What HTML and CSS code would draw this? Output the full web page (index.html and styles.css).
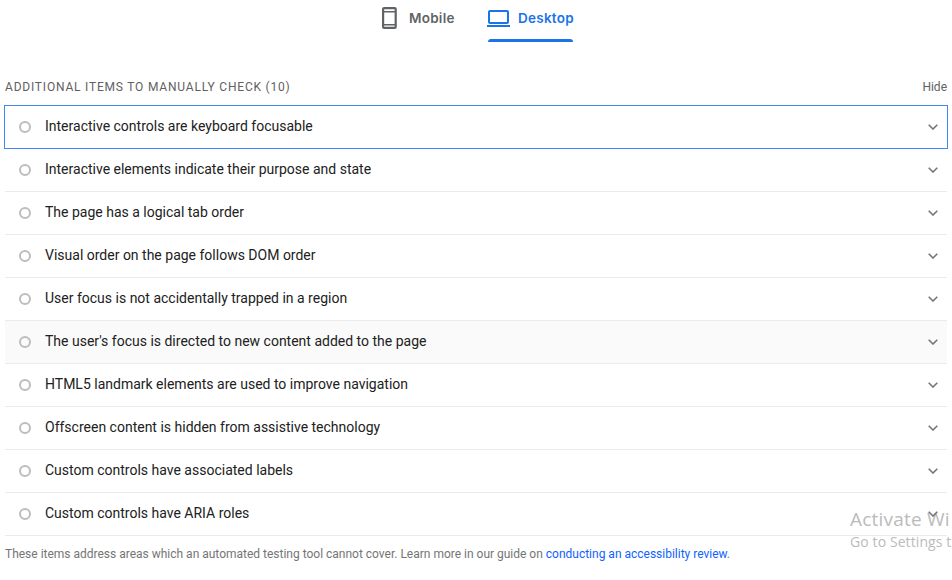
FILE: index.html
```
<!DOCTYPE html>
<html lang="en">
<head>
<meta charset="utf-8">
<title>Accessibility report</title>
<link rel="stylesheet" href="styles.css">
</head>
<body>
<svg class="defs" width="0" height="0">
  <symbol id="chevron" viewBox="0 0 10 6"><path d="M.7.8 5 5 9.3.8" fill="none" stroke="#757575" stroke-width="1.6"/></symbol>
</svg>
<nav class="tabs">
  <a class="tab mobile">
    <svg width="15" height="22" viewBox="0 0 15 22"><rect x="1.1" y="1.1" width="12.6" height="19.8" rx="1" fill="none" stroke="currentColor" stroke-width="2.2"/><path d="M2 4.75h11M2 17.75h11" stroke="currentColor" stroke-width="1.7"/></svg>
    <span>Mobile</span>
  </a>
  <a class="tab desktop">
    <svg width="23" height="17" viewBox="0 0 23 17"><rect x="2" y="1" width="19" height="12" rx="1" fill="none" stroke="currentColor" stroke-width="2"/><path d="M0 16h23" stroke="currentColor" stroke-width="2"/></svg>
    <span>Desktop</span>
  </a>
</nav>
<main class="group">
  <header class="group-header"><span class="group-title">ADDITIONAL ITEMS TO MANUALLY CHECK (10)</span><span>Hide</span></header>
  <ul class="audits">
    <li class="audit focused"><i class="dot"></i><span class="title">Interactive controls are keyboard focusable</span><svg class="chevron"><use href="#chevron"/></svg></li>
    <li class="audit"><i class="dot"></i><span class="title">Interactive elements indicate their purpose and state</span><svg class="chevron"><use href="#chevron"/></svg></li>
    <li class="audit"><i class="dot"></i><span class="title">The page has a logical tab order</span><svg class="chevron"><use href="#chevron"/></svg></li>
    <li class="audit"><i class="dot"></i><span class="title">Visual order on the page follows DOM order</span><svg class="chevron"><use href="#chevron"/></svg></li>
    <li class="audit"><i class="dot"></i><span class="title">User focus is not accidentally trapped in a region</span><svg class="chevron"><use href="#chevron"/></svg></li>
    <li class="audit hovered"><i class="dot"></i><span class="title">The user's focus is directed to new content added to the page</span><svg class="chevron"><use href="#chevron"/></svg></li>
    <li class="audit"><i class="dot"></i><span class="title">HTML5 landmark elements are used to improve navigation</span><svg class="chevron"><use href="#chevron"/></svg></li>
    <li class="audit"><i class="dot"></i><span class="title">Offscreen content is hidden from assistive technology</span><svg class="chevron"><use href="#chevron"/></svg></li>
    <li class="audit"><i class="dot"></i><span class="title">Custom controls have associated labels</span><svg class="chevron"><use href="#chevron"/></svg></li>
    <li class="audit"><i class="dot"></i><span class="title">Custom controls have ARIA roles</span><svg class="chevron"><use href="#chevron"/></svg></li>
  </ul>
  <p class="note">These items address areas which an automated testing tool cannot cover. Learn more in our guide on <a>conducting an accessibility review</a>.</p>
</main>
<aside class="watermark"><div class="wm-title">Activate Wi</div><div class="wm-text">Go to Settings t</div></aside>
</body>
</html>
```
FILE: styles.css
```
* { box-sizing: border-box; }
body { margin: 0; height: 580px; overflow: hidden; position: relative; background: #fff; font-family: Roboto, sans-serif; }
.defs { display: block; }
.tabs { display: flex; height: 42px; padding-left: 382px; color: #5f6368; font: 600 13.5px/36px Inter, sans-serif; letter-spacing: .25px; }
.tab { display: flex; align-items: center; height: 42px; padding-bottom: 6px; }
.mobile { width: 106px; gap: 12px; }
.desktop { position: relative; width: 85px; gap: 8px; color: #1a73e8; white-space: nowrap; }
.desktop::after { content: ""; position: absolute; left: 0; bottom: 0; width: 85px; height: 3px; border-radius: 3px 3px 0 0; background: #1a73e8; }
.tab svg { flex: none; }
.desktop svg { margin-left: -1px; }
.group { padding: 0 5px; }
.group-header { display: flex; justify-content: space-between; height: 64px; padding-top: 35px; color: #616161; font-size: 12px; line-height: 20px; }
.group-title { letter-spacing: .8px; }
.audits { list-style: none; margin: 0; padding: 0; }
.audit { display: flex; align-items: center; height: 43px; padding: 0 9px 0 14px; border-bottom: 1px solid #ebebeb; color: #212121; font-size: 14px; line-height: 20px; }
.focused { outline: 1px solid #4285f4; border-bottom-color: transparent; outline-offset: 0; height: 42px; margin-bottom: 1px; }
.hovered { background: #fafafa; }
.dot { width: 12px; height: 12px; border: 2px solid #bdbdbd; border-radius: 50%; margin-right: 14px; }
.title { flex: 1; position: relative; top: -1px; }
.chevron { position: relative; z-index: 1; width: 10px; height: 6px; }
.note { margin: 8px 0 0; color: #757575; font-size: 12px; line-height: 20px; letter-spacing: -.005px; }
.note a { color: #0f62fe; }
.watermark { position: absolute; left: 850px; top: 507px; width: 102px; overflow: hidden; color: #bbb; font-family: "Open Sans", sans-serif; white-space: nowrap; }
.wm-title { font-size: 19px; line-height: 25px; letter-spacing: .2px; }
.wm-text { font-size: 14px; line-height: 20px; letter-spacing: .1px; }
```
